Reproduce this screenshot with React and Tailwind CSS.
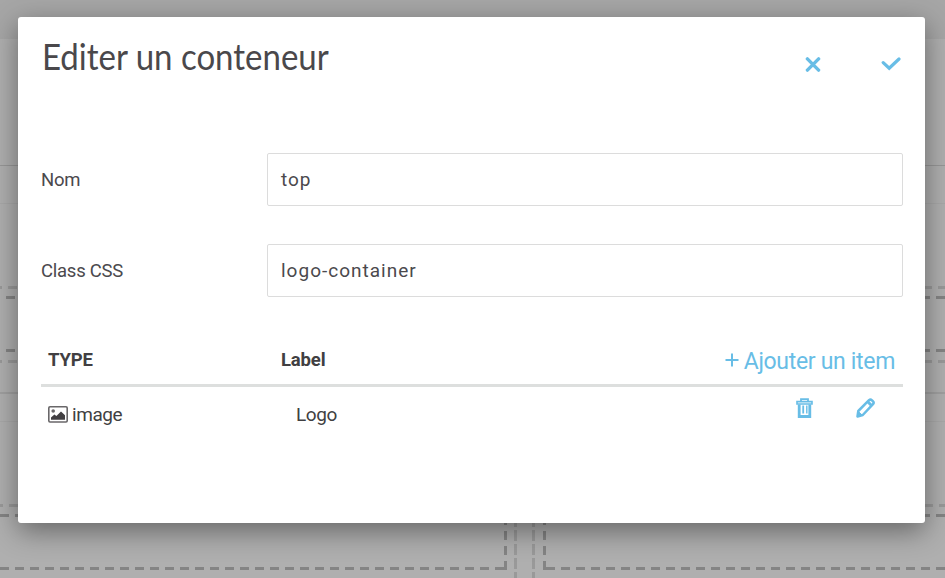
const dashH =
  "h-[3px] shrink-0 bg-[repeating-linear-gradient(90deg,#848484_0_9px,transparent_9px_15px)]";
const dashHLight =
  "h-[3px] shrink-0 bg-[repeating-linear-gradient(90deg,#999999_0_9px,transparent_9px_15px)]";
const dashV =
  "w-[3px] shrink-0 bg-[repeating-linear-gradient(0deg,#848484_0_9px,transparent_9px_15px)]";
const dashVLight =
  "w-[3px] shrink-0 bg-[repeating-linear-gradient(0deg,#999999_0_6px,transparent_6px_9px,#999999_9px_14px)]";

function Backdrop() {
  return (
    <div className="flex h-full w-full flex-col bg-[#afafaf]">
      <div className="h-[39px] shrink-0 bg-[#a6a6a6]" />
      <div className="h-[127px] shrink-0 border-b border-[#979797]" />
      <div className="h-[38px] shrink-0 border-b border-[#a8a8a8]" />
      <div className="h-[190px] shrink-0 border-b-2 border-[#a0a0a0] pt-[82px]">
        <div className={`${dashHLight} -ml-[7px]`} />
        <div className={`${dashH} mt-[7px] ml-[6px]`} />
        <div className={`${dashH} mt-[50px] ml-[6px]`} />
        <div className={`${dashHLight} mt-[8px] -ml-[7px]`} />
      </div>
      <div className="h-[28px] shrink-0 border-b border-[#a8a8a8]" />
      <div className="flex min-h-0 grow flex-col pt-[82px]">
        <div className={`${dashHLight} -ml-[6px]`} />
        <div className="flex min-h-0 grow justify-between">
          <div className="flex w-[517px]">
            <div className="mb-[8px] flex grow flex-col justify-between pt-[7px]">
              <div className={dashH} />
              <div className={dashH} />
            </div>
            <div className={`${dashV} mt-[8px] mb-[8px]`} />
            <div className="w-[7px]" />
            <div className={dashVLight} />
          </div>
          <div className="flex w-[413px]">
            <div className={dashVLight} />
            <div className="w-[8px]" />
            <div className={`${dashV} mt-[8px] mb-[8px]`} />
            <div className="mb-[8px] flex grow flex-col justify-between pt-[7px]">
              <div className={dashH} />
              <div className={dashH} />
            </div>
          </div>
        </div>
      </div>
    </div>
  );
}

function CloseIcon() {
  return (
    <svg className="h-[16px] w-[16px]" viewBox="0 0 16 16" fill="none" stroke="#68bde6" strokeWidth="3.4" strokeLinecap="round">
      <path d="M2.4 2.9 L13.6 14.1 M13.6 2.9 L2.4 14.1" />
    </svg>
  );
}

function CheckIcon() {
  return (
    <svg className="h-[14px] w-[20px]" viewBox="0 0 20 14" fill="none" stroke="#68bde6" strokeWidth="3.2" strokeLinecap="round">
      <path d="M2.2 5.6 L8.2 11.2 L18 2" />
    </svg>
  );
}

function PlusIcon() {
  return (
    <svg className="h-[14px] w-[14px]" viewBox="0 0 14 14" fill="none" stroke="#68bde6" strokeWidth="2">
      <path d="M7 0.5 V13.5 M0.5 7 H13.5" />
    </svg>
  );
}

function ImageIcon() {
  return (
    <svg className="h-[17px] w-[20px]" viewBox="0 0 20 17">
      <rect x="0.8" y="0.8" width="18.4" height="15.2" rx="1.2" fill="none" stroke="#696769" strokeWidth="1.6" />
      <circle cx="5.2" cy="5" r="1.8" fill="#696769" />
      <path d="M3 13.8 V11.4 L6.4 8.4 L8.4 10 L13 5.4 L17 9.2 V13.8 Z" fill="#413f42" />
    </svg>
  );
}

function TrashIcon() {
  return (
    <svg className="h-[20px] w-[17px]" viewBox="0 0 17 20" fill="none" stroke="#68bde6">
      <path d="M5 3.5 V1.2 H12 V3.5" strokeWidth="1.8" />
      <path d="M1 6 V3.6 H16 V6 Z" strokeWidth="1.6" />
      <path d="M3.2 6.5 V18.5 H13.8 V6.5" strokeWidth="2.8" />
      <path d="M7.2 7.5 V15.5" strokeWidth="1.8" />
      <path d="M10.8 7.5 V15.5" strokeWidth="1.4" />
    </svg>
  );
}

function PencilIcon() {
  return (
    <svg className="h-[20px] w-[19px]" viewBox="0 0 19 20" fill="none" stroke="#68bde6" strokeWidth="2.5" strokeLinejoin="round">
      <path d="M1.5 18.5 L2.3 13 L13 2.2 Q14.5 0.9 16 2.3 L17 3.4 Q18.3 4.8 17 6.2 L6.8 17 Z" />
      <path d="M11.8 3.8 L15.5 7.5" strokeWidth="3" />
      <path d="M2.3 13.5 L6.3 17.2 L1.5 18.5 Z" fill="#68bde6" strokeWidth="1" />
    </svg>
  );
}

function Field({ label, value }) {
  return (
    <label className="flex h-[53px] items-center text-[19px] text-[#4b494d]">
      <span className="w-[226px] shrink-0 pt-[2px] text-[18.5px] font-[380] tracking-[-0.25px]">{label}</span>
      <span className="flex h-full grow items-center rounded-[2px] border border-[#dcdcdc] pt-[2px] pl-[13px] font-[370] tracking-[1px]">
        {value}
      </span>
    </label>
  );
}

export default function App() {
  return (
    <div className="relative h-[578px] w-[945px] overflow-hidden font-[Roboto,sans-serif]">
      <Backdrop />
      <div className="absolute top-[17px] left-[18px] flex h-[506px] w-[907px] flex-col rounded-[3px] bg-white pr-[22px] pl-[23px] shadow-[0_8px_28px_rgba(0,0,0,0.42)]">
        <header className="flex h-[136px] shrink-0 items-start justify-between">
          <h1 className="mt-[15px] origin-left scale-x-[0.917] pl-[1px] font-[Lato,sans-serif] text-[36px] leading-[48px] font-normal text-[#4a484b]">
            Editer un conteneur
          </h1>
          <div className="mt-[39px] mr-[2px] flex items-center gap-[60px]">
            <CloseIcon />
            <CheckIcon />
          </div>
        </header>
        <div className="flex flex-col gap-[38px]">
          <Field label="Nom" value="top" />
          <Field label="Class CSS" value="logo-container" />
        </div>
        <div className="mt-[37px] flex h-[53px] shrink-0 items-center border-b-[3px] border-[#dddfde] pt-[3px] pl-[7px] text-[18.5px] text-[#413f42]">
          <span className="w-[233px] font-bold tracking-[-0.15px]">TYPE</span>
          <span className="font-bold tracking-[-0.15px]">Label</span>
          <span className="mt-[4px] mr-[8px] ml-auto flex items-center gap-[5px] text-[23px] text-[#68bde6]">
            <span className="mb-[6px]">
              <PlusIcon />
            </span>
            <span className="font-[380] tracking-[-0.32px]">Ajouter un item</span>
          </span>
        </div>
        <div className="flex h-[54px] items-center pl-[7px] text-[19px] tracking-[-0.45px] text-[#413f42]">
          <span className="flex w-[248px] items-center gap-[4px]">
            <ImageIcon />
            <span className="pt-[2px]">image</span>
          </span>
          <span className="pt-[2px]">Logo</span>
          <span className="mr-[28px] mb-[12px] ml-auto flex items-center gap-[43px]">
            <TrashIcon />
            <PencilIcon />
          </span>
        </div>
      </div>
    </div>
  );
}
